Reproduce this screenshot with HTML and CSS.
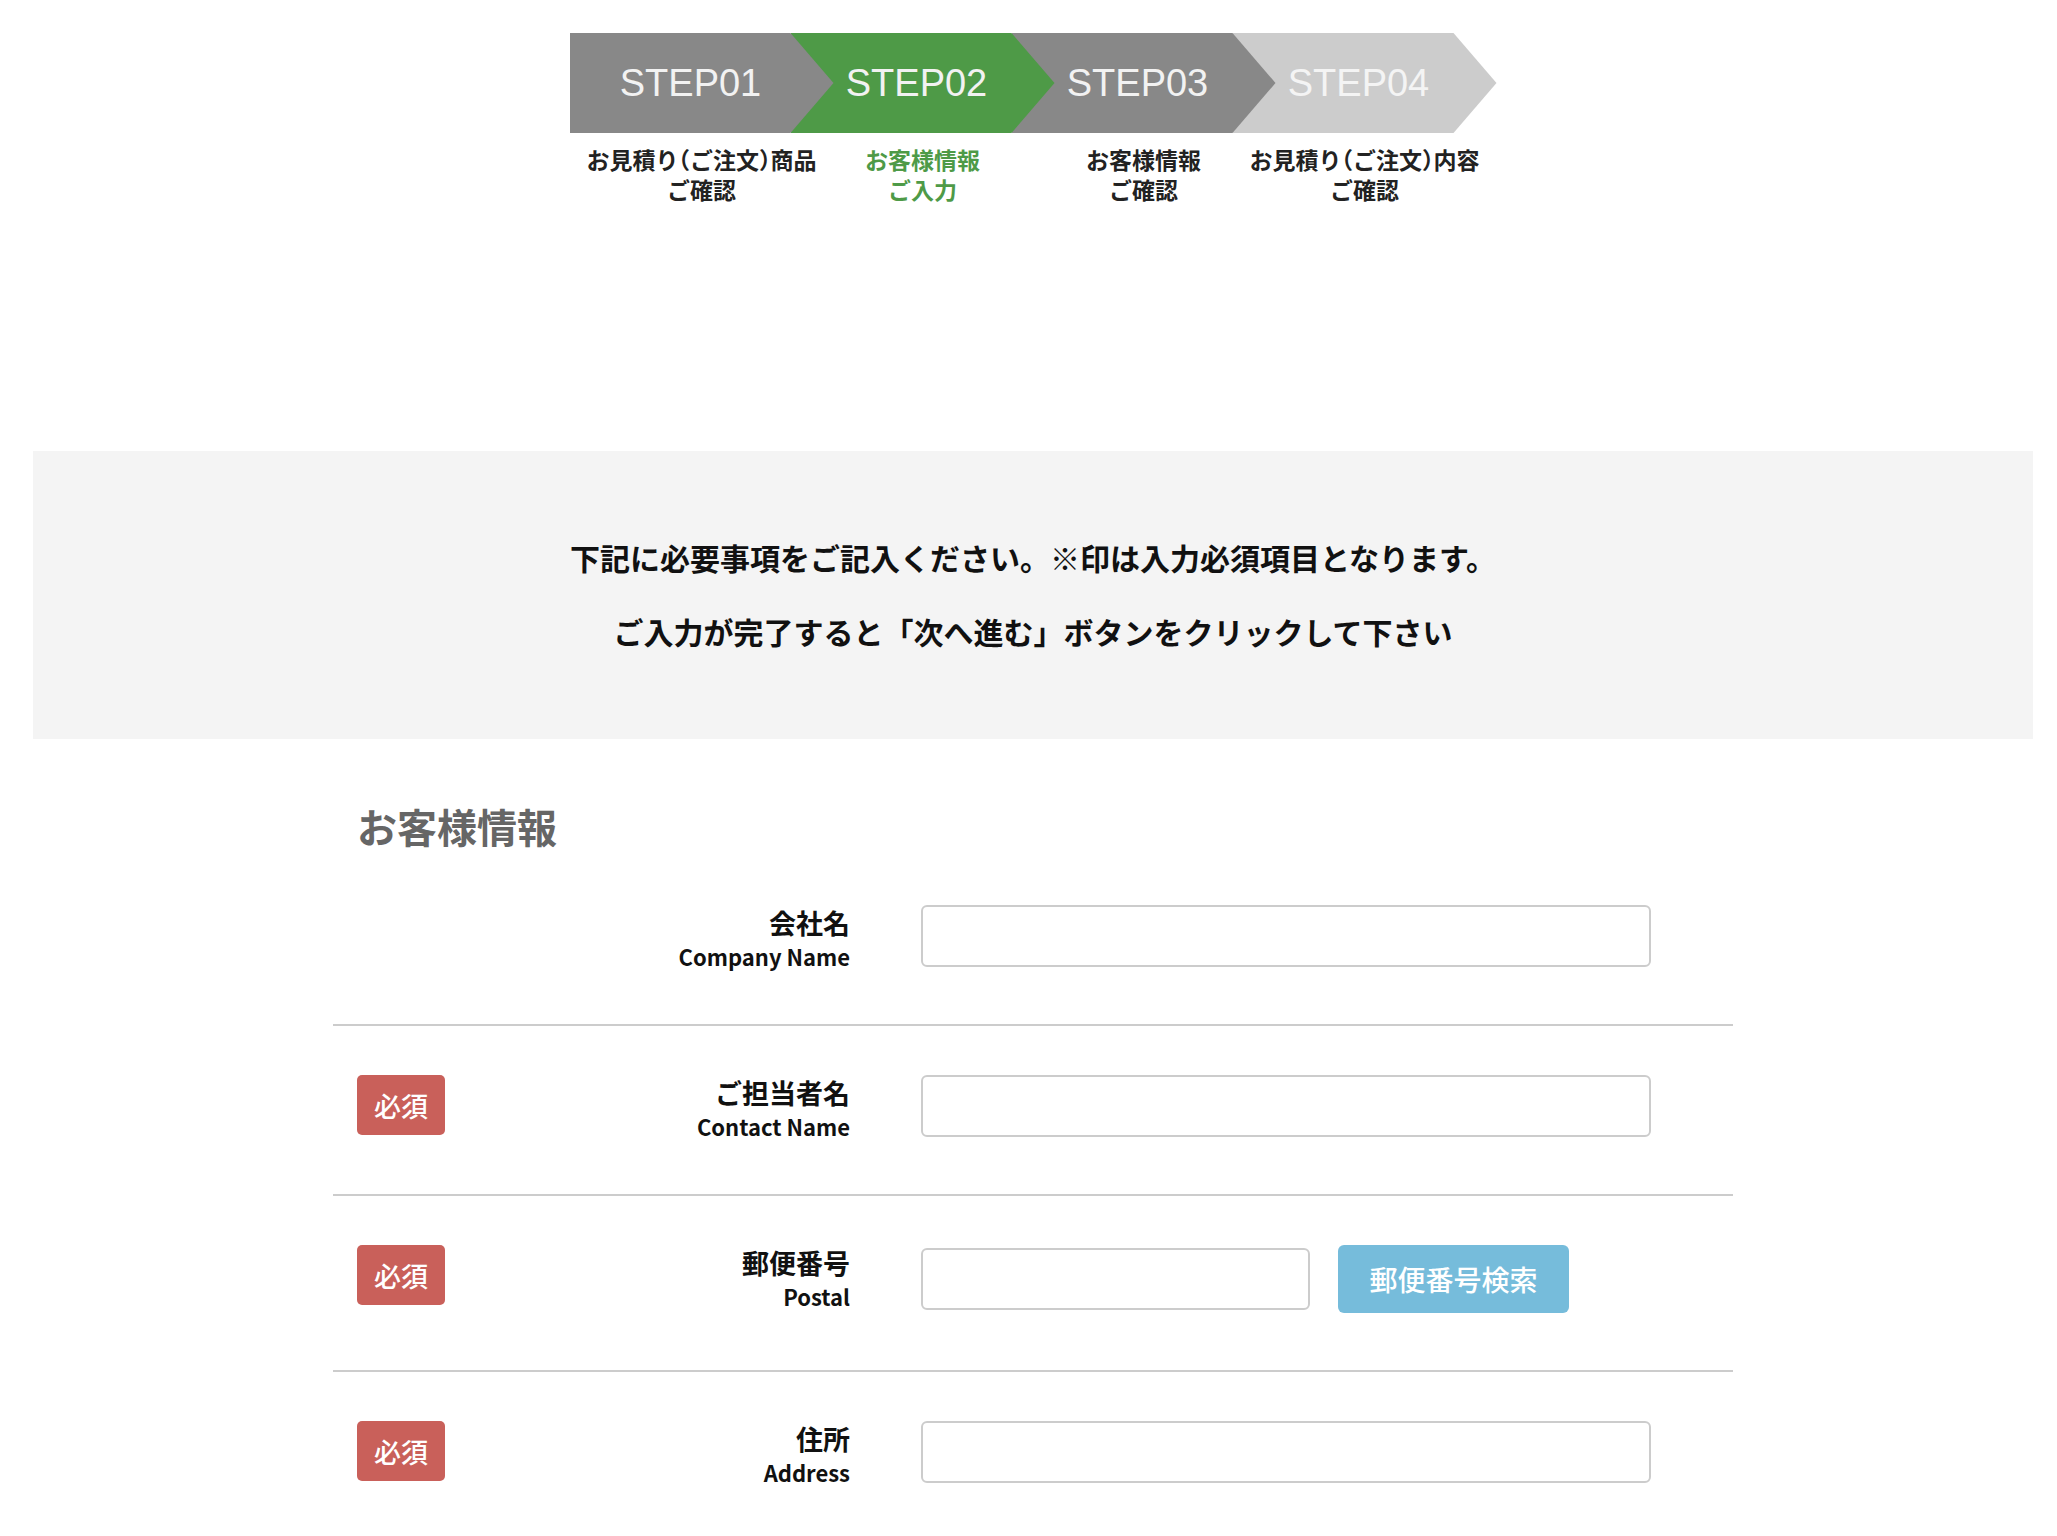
FILE: index.html
```html
<!DOCTYPE html>
<html lang="ja">
<head>
<meta charset="utf-8">
<title>お客様情報入力</title>
<link rel="stylesheet" href="styles.css">
</head>
<body>
<div class="page">
  <div class="steps">
    <div class="steps-bar">
      <div class="step step-done">STEP01</div>
      <div class="step step-active">STEP02</div>
      <div class="step step-next">STEP03</div>
      <div class="step step-last">STEP04</div>
    </div>
    <div class="step-labels">
      <div class="step-label">お見積り（ご注文）商品<br>ご確認</div>
      <div class="step-label step-label-active">お客様情報<br>ご入力</div>
      <div class="step-label">お客様情報<br>ご確認</div>
      <div class="step-label">お見積り（ご注文）内容<br>ご確認</div>
    </div>
  </div>

  <div class="notice">
    <p>下記に必要事項をご記入ください。※印は入力必須項目となります。</p>
    <p>ご入力が完了すると「次へ進む」ボタンをクリックして下さい</p>
  </div>

  <div class="form">
    <h2 class="form-title">お客様情報</h2>

    <div class="row">
      <div class="badge-cell"></div>
      <div class="label"><span class="label-ja">会社名</span><span class="label-en">Company Name</span></div>
      <div class="field"><input class="input input-wide" type="text"></div>
    </div>

    <div class="row">
      <div class="badge-cell"><span class="badge">必須</span></div>
      <div class="label"><span class="label-ja">ご担当者名</span><span class="label-en">Contact Name</span></div>
      <div class="field"><input class="input input-wide" type="text"></div>
    </div>

    <div class="row">
      <div class="badge-cell"><span class="badge">必須</span></div>
      <div class="label"><span class="label-ja">郵便番号</span><span class="label-en">Postal</span></div>
      <div class="field">
        <input class="input input-postal" type="text">
        <button class="zip-btn" type="button">郵便番号検索</button>
      </div>
    </div>

    <div class="row">
      <div class="badge-cell"><span class="badge">必須</span></div>
      <div class="label"><span class="label-ja">住所</span><span class="label-en">Address</span></div>
      <div class="field"><input class="input input-wide" type="text"></div>
    </div>
  </div>
</div>
</body>
</html>
```

FILE: styles.css
```css
* { box-sizing: border-box; }

html, body {
  margin: 0;
  padding: 0;
  background: #fff;
}

body {
  font-family: "Noto Sans CJK JP", "Noto Sans", sans-serif;
  color: #111;
}

.page {
  padding: 33px 24px 0 33px;
}

/* ---------- steps ---------- */
.steps {
  width: 927px;
  margin: 0 auto;
}

.steps-bar {
  display: flex;
  height: 100px;
}

.step {
  width: 264px;
  height: 100px;
  flex: none;
  display: flex;
  align-items: center;
  justify-content: center;
  padding-right: 12px;
  font-family: "Liberation Sans", Arial, sans-serif;
  font-size: 38px;
  color: #f2f2f2;
  clip-path: polygon(0 0, calc(100% - 43px) 0, 100% 50%, calc(100% - 43px) 100%, 0 100%);
}

.step + .step { margin-left: -43px; }

.step-done { background: #888888; z-index: 4; padding-right: 22px; }
.step-active { background: #4e9a47; z-index: 3; }
.step-next { background: #888888; z-index: 2; }
.step-last { background: #cccccc; z-index: 1; color: #f4f4f4; }

.step-labels {
  display: flex;
  margin-top: 11px;
}

.step-label {
  width: 264px;
  flex: none;
  text-align: center;
  font-size: 23px;
  line-height: 30px;
  font-weight: 700;
  color: #222;
  white-space: nowrap;
  font-feature-settings: "halt";
}

.step-label + .step-label { margin-left: -43px; }

.step-label-active { color: #4e9a47; }

/* ---------- notice ---------- */
.notice {
  margin-top: 247px;
  background: #f4f4f4;
  padding: 84px 0 86px;
  text-align: center;
}

.notice p {
  margin: 0;
  font-size: 30px;
  line-height: 44px;
  font-weight: 700;
  color: #111;
}

.notice p + p { margin-top: 30px; }

/* ---------- form ---------- */
.form {
  width: 1400px;
  margin: 0 auto;
}

.form-title {
  margin: 59px 0 2px;
  padding-left: 24px;
  font-size: 40px;
  line-height: 56px;
  font-weight: 700;
  color: #666;
}

.row {
  display: flex;
  align-items: center;
  padding: 49px 0 57px 24px;
  border-bottom: 2px solid #cccccc;
}

.badge-cell {
  width: 88px;
  flex: none;
  align-self: flex-start;
  min-height: 1px;
}

.badge {
  display: flex;
  align-items: center;
  justify-content: center;
  width: 88px;
  height: 60px;
  background: #c9605a;
  color: #fff;
  border-radius: 5px;
  font-size: 27px;
  font-weight: 500;
}

.label {
  width: 405px;
  height: 62px;
  flex: none;
  align-self: flex-start;
  display: flex;
  flex-direction: column;
  align-items: flex-end;
  color: #111;
}

.label-ja {
  font-size: 27px;
  line-height: 36px;
  font-weight: 700;
}

.label-en {
  font-size: 22px;
  line-height: 30px;
  font-weight: 700;
}

.field {
  margin-left: 71px;
  display: flex;
  align-items: center;
}

.input {
  height: 62px;
  border: 2px solid #cccccc;
  border-radius: 6px;
  background: #fff;
  font-size: 24px;
  padding: 0 12px;
  margin: 0;
}

.input-wide { width: 730px; }
.input-postal { width: 389px; }

.zip-btn {
  margin-left: 28px;
  width: 231px;
  height: 68px;
  border: none;
  border-radius: 6px;
  background: #76bcdb;
  color: #fff;
  font-family: "Noto Sans CJK JP", sans-serif;
  font-size: 28px;
  font-weight: 500;
  padding: 0;
}
```
